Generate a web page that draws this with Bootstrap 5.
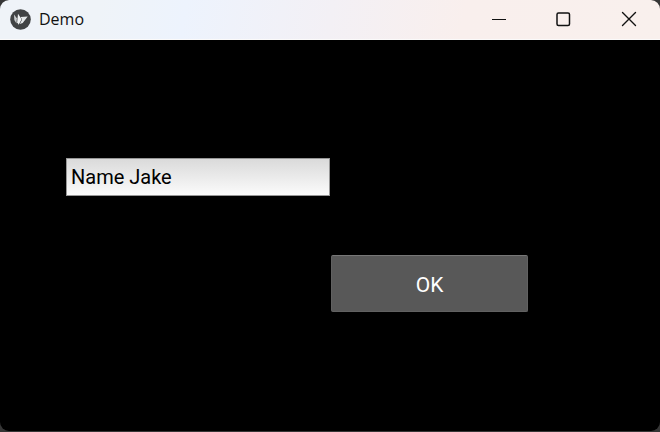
<!DOCTYPE html>
<html lang="en">
<head>
<meta charset="utf-8">
<meta name="viewport" content="width=device-width, initial-scale=1">
<title>Demo</title>
<link href="https://cdn.jsdelivr.net/npm/bootstrap@5.3.0/dist/css/bootstrap.min.css" rel="stylesheet">
<style>
body { background: #363636; }
.desktop-edge { padding-bottom: 1px; }
.app-window { background: #000; border-radius: 9px; overflow: hidden; }
.title-bar { height: 40px; background: linear-gradient(100deg, #eff3f8 0%, #eff3f8 15%, #edf3fd 28%, #f3f0f5 50%, #f9efed 70%, #f9f0ed 100%); border-bottom: 1px solid #fbfafa; }
.title-id { gap: 8px; padding-left: 10px; padding-bottom: 1px; }
.title-text { font: 16px/24px "Open Sans", sans-serif; color: #111; }
.caption-set { gap: 3px; padding-bottom: 1px; }
.caption-btn { width: 62px; color: #111; border: 0; background: transparent; }
.caption-btn:hover { background: #0001; }
.form-grid { display: grid; grid-template-columns: 10% 40% 30%; grid-template-rows: 38px 57px; row-gap: 59px; padding-top: 118px; font-family: Roboto, sans-serif; }
.name-field { grid-area: 1 / 2; min-width: 0; padding: 0 4px; font-size: 20px; line-height: 24px; color: #000; border: 1px solid #979797; border-radius: 0; background: linear-gradient(#dadada, #fbfbfb); }
.name-field:focus { outline: 1px solid #3297c6; }
.ok-btn { grid-area: 2 / 3; margin-left: 1px; padding: 3px 0 0; font-size: 21px; line-height: 24px; color: #fff; background: #585858; border: 1px solid #616161; border-top-color: #777; border-radius: 2px; }
.ok-btn:active { background: #327793; }
</style>
</head>
<body>
<div class="desktop-edge min-vh-100 d-flex flex-column">
  <main class="app-window flex-grow-1">
    <header class="title-bar d-flex align-items-stretch justify-content-between">
      <div class="title-id d-flex align-items-center">
        <svg width="21" height="21" viewBox="0 0 21 21" aria-hidden="true">
          <circle cx="10.500" cy="10.500" r="10.300" fill="#414344"/>
          <path d="M4 5.500l2.800 3.700-.3 5.300L4.300 11z" fill="#c9cccd"/>
          <path d="M8 4.800l3.600 5.400-2.900 5.500-1.500-2.500z" fill="#f1f3f4"/>
          <path d="M10.600 7.900l7.100-.3-5 6.500-2.900.9 2.300-4.500z" fill="#e4e7e8"/>
        </svg>
        <span class="title-text">Demo</span>
      </div>
      <div class="caption-set d-flex">
        <button class="caption-btn d-flex align-items-center justify-content-center p-0" type="button" aria-label="Minimize">
          <svg width="16" height="16" viewBox="0 0 16 16"><path d="M1 8.500h14" stroke="currentColor"/></svg>
        </button>
        <button class="caption-btn d-flex align-items-center justify-content-center p-0" type="button" aria-label="Maximize">
          <svg width="16" height="16" viewBox="0 0 16 16"><rect x="1" y="2" width="12.500" height="12.500" rx="1.500" fill="none" stroke="currentColor" stroke-width="1.500"/></svg>
        </button>
        <button class="caption-btn d-flex align-items-center justify-content-center p-0" type="button" aria-label="Close">
          <svg width="16" height="16" viewBox="0 0 16 16"><path d="M1.500 1.500l13 13m0-13l-13 13" stroke="currentColor" stroke-width="1.400" stroke-linecap="round"/></svg>
        </button>
      </div>
    </header>
    <form class="form-grid" onsubmit="return false">
      <input class="name-field" type="text" value="Name Jake" aria-label="Name">
      <button class="ok-btn" type="submit">OK</button>
    </form>
  </main>
</div>
<script src="https://cdn.jsdelivr.net/npm/bootstrap@5.3.0/dist/js/bootstrap.bundle.min.js"></script>
</body>
</html>
